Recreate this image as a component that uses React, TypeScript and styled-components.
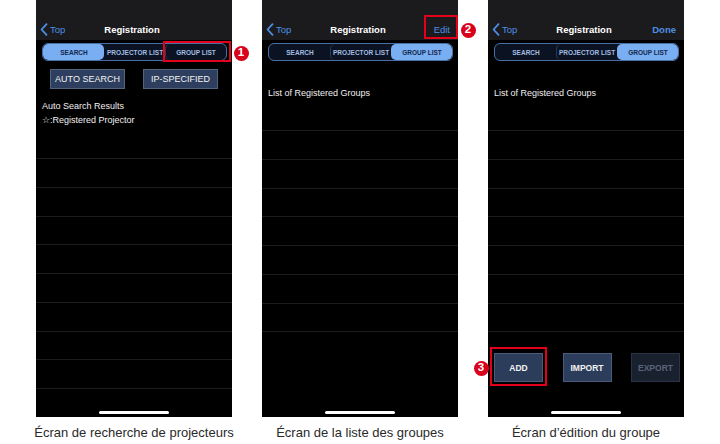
import React from 'react'
import styled, { createGlobalStyle } from 'styled-components'

const GlobalStyle = createGlobalStyle`
  html, body {
    margin: 0;
    padding: 0;
    background: #ffffff;
  }
  body {
    font-family: 'Liberation Sans', Arial, sans-serif;
  }
`

type Tab = 'search' | 'projectors' | 'groups'

const TABS: { key: Tab; label: string }[] = [
  { key: 'search', label: 'SEARCH' },
  { key: 'projectors', label: 'PROJECTOR LIST' },
  { key: 'groups', label: 'GROUP LIST' },
]

/* шеврон кнопки "назад" */
const Chevron = () => (
  <svg width="8" height="13" viewBox="0 0 8 13">
    <path
      d="M6.5 1.2 L1.6 6.5 L6.5 11.8"
      fill="none"
      stroke="currentColor"
      strokeWidth="1.8"
      strokeLinecap="round"
      strokeLinejoin="round"
    />
  </svg>
)

const NavHeader: React.FC<{ action?: string; bold?: boolean }> = ({
  action,
  bold,
}) => (
  <Nav>
    <Back>
      <Chevron />
      <span>Top</span>
    </Back>
    <Title>Registration</Title>
    <Action $bold={bold}>{action}</Action>
  </Nav>
)

const Segments: React.FC<{ active: Tab }> = ({ active }) => (
  <Segmented>
    {TABS.map((tab, i) => (
      <Segment
        key={tab.key}
        $active={tab.key === active}
        $divider={i > 0 && tab.key !== active && TABS[i - 1].key !== active}
      >
        {tab.label}
      </Segment>
    ))}
  </Segmented>
)

const Rows: React.FC<{ count: number }> = ({ count }) => (
  <List>
    {Array.from({ length: count }).map((_, i) => (
      <Row key={i} />
    ))}
  </List>
)

/* красная рамка и номер-выноска поверх экрана */
const Callout: React.FC<{
  box: [number, number, number, number]
  badge: [number, number]
  num: string
}> = ({ box, badge, num }) => (
  <>
    <Frame
      style={{ left: box[0], top: box[1], width: box[2], height: box[3] }}
    />
    <Badge style={{ left: badge[0] - 7.5, top: badge[1] - 7.5 }}>{num}</Badge>
  </>
)

const SearchScreen = () => (
  <Column>
    <Phone>
      <NavHeader />
      <Segments active="search" />
      <ActionRow>
        <Button>AUTO SEARCH</Button>
        <Button>IP-SPECIFIED</Button>
      </ActionRow>
      <Info>
        <Line>Auto Search Results</Line>
        <Line>☆:Registered Projector</Line>
      </Info>
      <Spacer $h={32} />
      <Rows count={8} />
      <HomeBar />
      <Callout box={[127, 41, 68, 21]} badge={[205, 53]} num="1" />
    </Phone>
    <Caption>Écran de recherche de projecteurs</Caption>
  </Column>
)

const GroupScreen = () => (
  <Column>
    <Phone>
      <NavHeader action="Edit" />
      <Segments active="groups" />
      <ListTitle>List of Registered Groups</ListTitle>
      <Rows count={7} />
      <HomeBar />
      <Callout box={[162, 15, 34, 24]} badge={[206, 30]} num="2" />
    </Phone>
    <Caption>Écran de la liste des groupes</Caption>
  </Column>
)

const EditScreen = () => (
  <Column>
    <Phone>
      <NavHeader action="Done" bold />
      <Segments active="groups" />
      <ListTitle>List of Registered Groups</ListTitle>
      <Rows count={7} />
      <Toolbar>
        <ToolButton>ADD</ToolButton>
        <ToolButton>IMPORT</ToolButton>
        <ToolButton disabled>EXPORT</ToolButton>
      </Toolbar>
      <HomeBar />
      <Callout box={[2, 347, 57, 39]} badge={[-7, 368]} num="3" />
    </Phone>
    <Caption>Écran d’édition du groupe</Caption>
  </Column>
)

export default function App() {
  return (
    <>
      <GlobalStyle />
      <Page>
        <SearchScreen />
        <GroupScreen />
        <EditScreen />
      </Page>
    </>
  )
}

const Page = styled.div`
  display: flex;
  gap: 30px;
  padding-left: 36px;
  width: 720px;
  height: 444px;
  box-sizing: border-box;
`

const Column = styled.div`
  display: flex;
  flex-direction: column;
  align-items: center;
  width: 196px;
`

const Phone = styled.div`
  position: relative;
  display: flex;
  flex-direction: column;
  width: 196px;
  height: 417px;
  background: #000;
`

const Caption = styled.div`
  margin-top: 8px;
  font-size: 13px;
  line-height: 16px;
  color: #2a2a2a;
  white-space: nowrap;
`

const Nav = styled.div`
  display: grid;
  grid-template-columns: 1fr auto 1fr;
  align-items: center;
  height: 40px;
  padding: 18px 8px 0 4px;
  box-sizing: border-box;
  background: #1b1b1d;
  font-size: 9px;
`

const Back = styled.div`
  display: flex;
  align-items: center;
  gap: 2px;
  color: #4d8fe6;
  font-size: 9.5px;
`

const Title = styled.div`
  color: #fff;
  font-weight: 700;
  font-size: 9.5px;
`

const Action = styled.div<{ $bold?: boolean }>`
  justify-self: end;
  color: #4d8fe6;
  font-size: 9.5px;
  font-weight: ${(p) => (p.$bold ? 700 : 400)};
`

const Segmented = styled.div`
  display: flex;
  height: 18px;
  margin: 3px 5px 0 6px;
  border: 1px solid #4a6fa5;
  border-radius: 6px;
  background: #0b1322;
  box-sizing: border-box;
  overflow: hidden;
`

const Segment = styled.div<{ $active: boolean; $divider: boolean }>`
  flex: 1;
  display: flex;
  align-items: center;
  justify-content: center;
  font-size: 6.5px;
  font-weight: 700;
  border-radius: 5px;
  color: ${(p) => (p.$active ? '#14284a' : '#a3bde2')};
  background: ${(p) => (p.$active ? '#79aef3' : 'transparent')};
  border-left: 1px solid ${(p) => (p.$divider ? '#2c3a52' : 'transparent')};
`

const ActionRow = styled.div`
  display: flex;
  justify-content: center;
  gap: 18px;
  margin-top: 8px;
`

const Button = styled.div`
  display: flex;
  align-items: center;
  justify-content: center;
  width: 75px;
  height: 20px;
  box-sizing: border-box;
  background: #2d3e5e;
  border: 1px solid #51637f;
  color: #f2f2f2;
  font-size: 9px;
`

const Info = styled.div`
  display: flex;
  flex-direction: column;
  gap: 2px;
  margin-top: 11px;
  padding-left: 6px;
`

const Line = styled.div`
  color: #f0f0f0;
  font-size: 9px;
  line-height: 12px;
`

const Spacer = styled.div<{ $h: number }>`
  height: ${(p) => p.$h}px;
`

const ListTitle = styled.div`
  height: 69px;
  padding: 26px 0 0 6px;
  box-sizing: border-box;
  color: #f0f0f0;
  font-size: 9px;
  line-height: 12px;
`

const List = styled.div`
  border-top: 1px solid #1c1c1c;
`

const Row = styled.div`
  height: 28.75px;
  box-sizing: border-box;
  border-bottom: 1px solid #1c1c1c;
`

const Toolbar = styled.div`
  display: flex;
  justify-content: space-between;
  padding: 21px 4px 0 6px;
`

const ToolButton = styled.div<{ disabled?: boolean }>`
  display: flex;
  align-items: center;
  justify-content: center;
  width: 49px;
  height: 29px;
  box-sizing: border-box;
  font-size: 8.5px;
  font-weight: 700;
  background: ${(p) => (p.disabled ? '#19212f' : '#2c3d5c')};
  border: 1px solid ${(p) => (p.disabled ? '#2a3446' : '#4b5c7b')};
  color: ${(p) => (p.disabled ? '#5a6579' : '#f2f2f2')};
`

const HomeBar = styled.div`
  position: absolute;
  left: 63px;
  bottom: 3px;
  width: 70px;
  height: 3px;
  border-radius: 2px;
  background: #fff;
`

const Frame = styled.div`
  position: absolute;
  box-sizing: border-box;
  border: 2px solid #e2001a;
`

const Badge = styled.div`
  position: absolute;
  display: flex;
  align-items: center;
  justify-content: center;
  width: 15px;
  height: 15px;
  border-radius: 50%;
  background: #d8001a;
  color: #fff;
  font-size: 11.5px;
  font-weight: 700;
  line-height: 1;
`
